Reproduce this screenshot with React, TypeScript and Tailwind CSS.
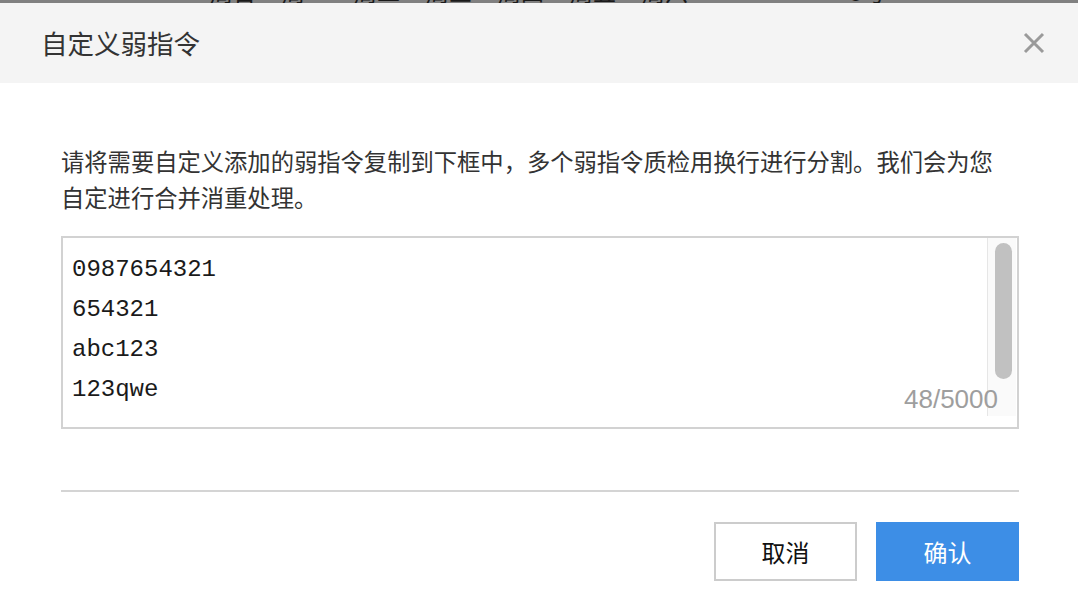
import React from "react";

const cjk = { fontFamily: '"Noto Sans CJK SC", "Noto Sans", sans-serif' };
const mono = { fontFamily: '"Liberation Mono", "DejaVu Sans Mono", monospace' };

export default function App() {
  const days = ["周日", "周一", "周二", "周三", "周四", "周五", "周六"];
  return (
    <div className="w-[1078px] h-[610px] bg-white overflow-hidden flex flex-col" style={cjk}>
      {/* masked page behind modal */}
      <div className="h-[3px] bg-[#808080] overflow-hidden shrink-0">
        <div className="flex -mt-[22px] pl-[210px] text-[23px] leading-[26px] text-[#1a1a1a]">
          {days.map((d) => (
            <span key={d} className="w-[72px] shrink-0">{d}</span>
          ))}
          <span className="w-[136px] shrink-0 pl-[4px]" style={{ fontFamily: '"Liberation Sans", sans-serif' }}>15:00</span>
          <span className="shrink-0">5号</span>
        </div>
      </div>

      {/* header */}
      <div className="h-[80px] bg-[#f4f4f4] flex items-center justify-between pl-[41px] pr-[33px] shrink-0">
        <span className="text-[26.5px] text-[#333333] leading-none">自定义弱指令</span>
        <svg width="22" height="22" viewBox="0 0 22 22" className="block">
          <path d="M2 2 L20 20 M20 2 L2 20" stroke="#9a9a9a" strokeWidth="3" strokeLinecap="butt" />
        </svg>
      </div>

      {/* body */}
      <div className="flex flex-col pl-[61px] pr-[59px] pt-[60px]">
        <p className="text-[23.3px] leading-[36px] text-[#333333] w-[945px]">
          请将需要自定义添加的弱指令复制到下框中，多个弱指令质检用换行进行分割。我们会为您自定进行合并消重处理。
        </p>

        <div className="relative mt-[21px] h-[193px] border-2 border-[#d2d2d2] flex">
          <div className="flex-1 pl-[9px] pt-[12px] text-[24px] leading-[40px] text-[#1a1a1a]" style={mono}>
            <div>0987654321</div>
            <div>654321</div>
            <div>abc123</div>
            <div>123qwe</div>
          </div>
          <div className="w-[29px] h-[178px] mr-[1px] bg-[#fafafa] border-l border-[#e6e6e6] pl-[7px] pr-[4px] pt-[5px]">
            <div className="h-[136px] rounded-full bg-[#c1c1c1]" />
          </div>
          <span
            className="absolute right-[19px] bottom-[14px] text-[26px] leading-[28px] text-[#9e9e9e]"
            style={{ fontFamily: '"Liberation Sans", Arial, sans-serif' }}
          >
            48/5000
          </span>
        </div>

        <div className="mt-[61px] h-[2px] bg-[#d4d4d4]" />

        <div className="mt-[30px] flex justify-end gap-[19px]">
          <button className="w-[143px] h-[59px] border-2 border-[#cccccc] bg-white text-[24px] text-[#111111] flex items-center justify-center" style={cjk}>
            取消
          </button>
          <button className="w-[143px] h-[59px] bg-[#3d8ee6] text-[24px] text-white flex items-center justify-center" style={cjk}>
            确认
          </button>
        </div>
      </div>
    </div>
  );
}
